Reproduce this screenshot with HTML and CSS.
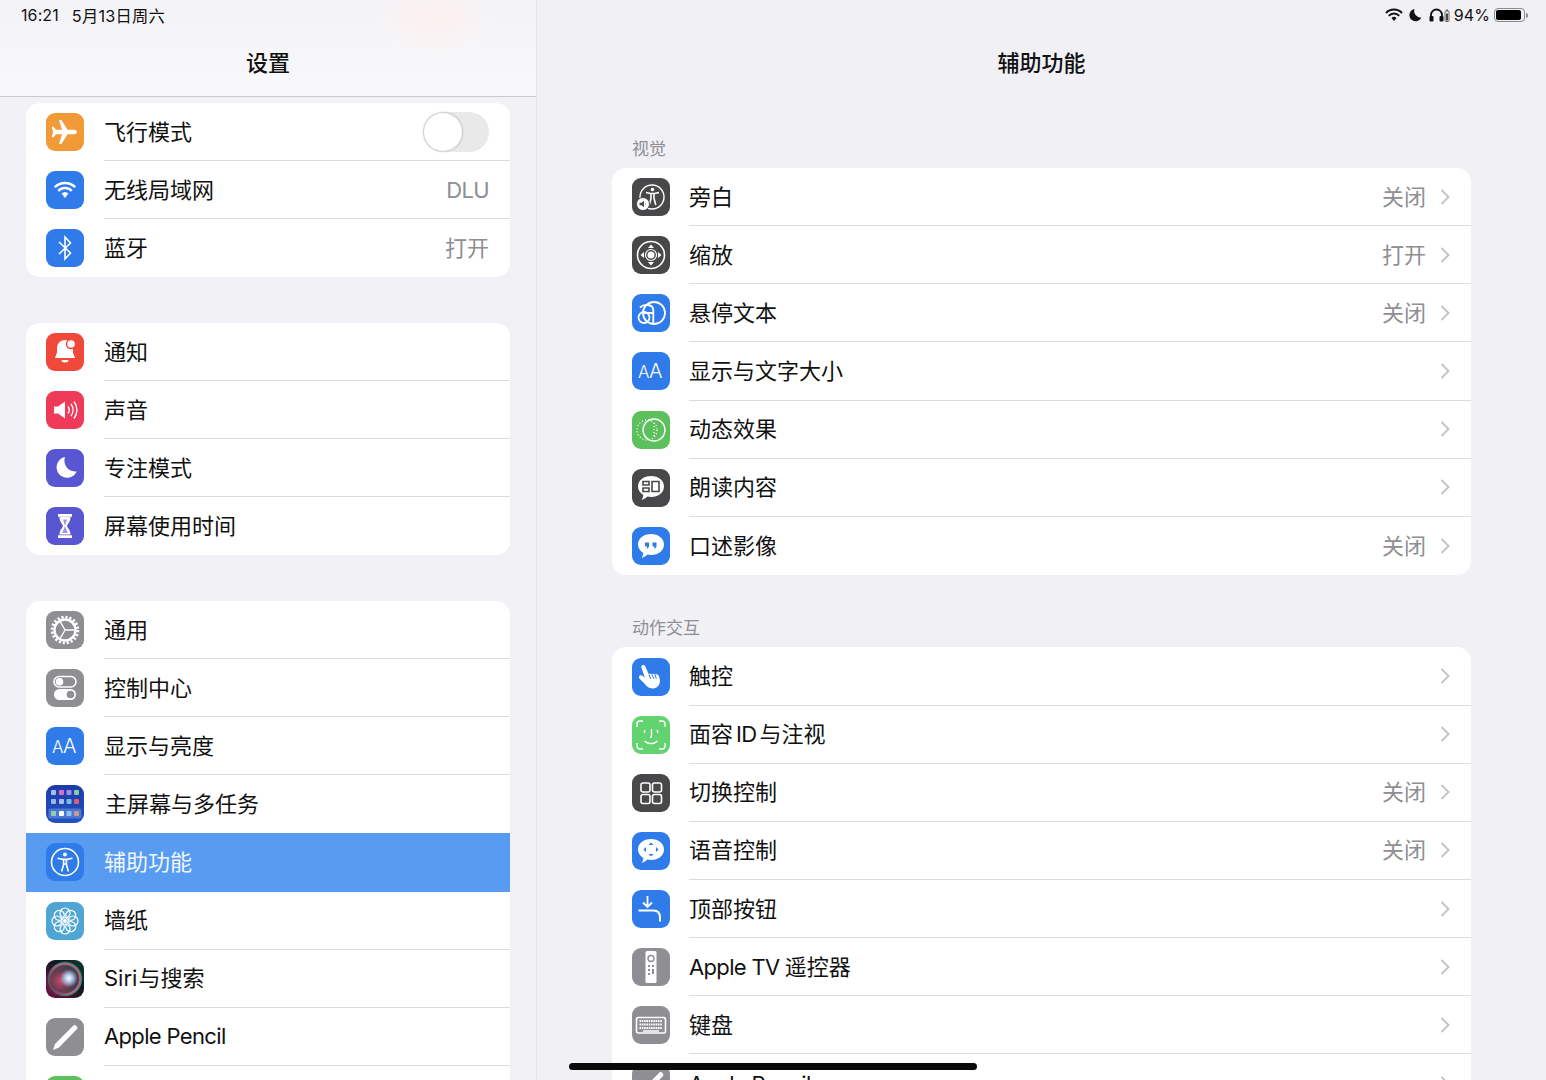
FILE: index.html
```html
<!DOCTYPE html>
<html lang="zh-CN">
<head>
    <meta charset="UTF-8">
    <meta name="viewport" content="width=device-width, initial-scale=1.0">
    <title>设置</title>
    <link rel="stylesheet" href="styles.css">
</head>
<body>
    <div class="app">
        <!-- Left column -->
        <div class="sidebar">
            <div class="side-header">
                <div class="status-bar"><span>16:21</span><span class="date">5月13日周六</span></div>
                <h1 class="title">设置</h1>
            </div>
            <div class="side-list">
                <div class="group">
                    <div class="row">
                        <svg class="icon i-orange" viewBox="0 0 38 38"><path class="fill" d="M31 19c0-1.3-1.6-2.2-3-2.2h-6.5L15.5 7h-2.6l3.2 9.8H10L7.6 13.7H5.8L7 19l-1.2 5.3h1.8l2.4-3.1h6.1L12.9 31h2.6l6-9.8H28c1.4 0 3-.9 3-2.2z"/></svg>
                        <div class="row-body"><span class="label">飞行模式</span><div class="toggle"><div class="knob"></div></div></div>
                    </div>
                    <div class="row">
                        <svg class="icon i-blue" viewBox="0 0 38 38"><path class="line w24" d="M8.75 16.25a14.5 14.5 0 0 1 20.5 0M12.3 19.8a9.5 9.5 0 0 1 13.4 0"/><path class="fill" d="M15.6 22.6a5 5 0 0 1 6.8 0L19 27z"/></svg>
                        <div class="row-body"><span class="label">无线局域网</span><span class="value latin">DLU</span></div>
                    </div>
                    <div class="row">
                        <svg class="icon i-blue" viewBox="0 0 38 38"><path class="line w16" d="M13 13l11.5 11L19 30V8l5.5 6L13 25"/></svg>
                        <div class="row-body"><span class="label">蓝牙</span><span class="value">打开</span></div>
                    </div>
                </div>

                <div class="group">
                    <div class="row">
                        <svg class="icon i-red" viewBox="0 0 38 38"><path class="fill" d="M19 7c-5 0-8 3.6-8 8.5v4L9 25h20l-2-5.500v-4C27 10.600 24 7 19 7zM15.500 27h7a3.500 2.500 0 0 1-7 0z"/><circle cx="25" cy="11" r="4.500" fill="#fff" stroke="#f0493a" stroke-width="1.500"/></svg>
                        <div class="row-body"><span class="label">通知</span></div>
                    </div>
                    <div class="row">
                        <svg class="icon i-pink" viewBox="0 0 38 38"><path class="fill" d="M8 15.500h4l7-5v17l-7-5H8z"/><path class="line w14" d="M22 15.500a6 6 0 0 1 0 7M25 13a10 10 0 0 1 0 12M28 10.500a14 14 0 0 1 0 17"/></svg>
                        <div class="row-body"><span class="label">声音</span></div>
                    </div>
                    <div class="row">
                        <svg class="icon i-indigo" viewBox="0 0 38 38"><path class="fill" d="M19 8a10.500 10.500 0 1 0 11.700 14.500A11 11 0 0 1 19 8z"/></svg>
                        <div class="row-body"><span class="label">专注模式</span></div>
                    </div>
                    <div class="row">
                        <svg class="icon i-indigo" viewBox="0 0 38 38"><path class="fill" d="M12 7h14v2.800H12zM12 28.200h14V31H12zM13.500 10h11c0 5-3 7-3.500 9 .5 2 3.500 4 3.500 8.500h-11c0-4.500 3-6.500 3.500-8.500-.5-2-3.500-4-3.500-9z"/><path d="M17 12.500h4L19 19l2.800 7h-5.600L19 19z" fill="#5856d0" opacity=".6"/></svg>
                        <div class="row-body"><span class="label">屏幕使用时间</span></div>
                    </div>
                </div>

                <div class="group">
                    <div class="row">
                        <svg class="icon i-gray" viewBox="0 0 38 38"><circle class="line" cx="19" cy="19" r="12.800" stroke-width="3" stroke-dasharray="2.200 1.820"/><circle class="line w24" cx="19" cy="19" r="10.500"/><path class="line w14" d="M19 19h9M19 19l-4.500-7.800M19 19l-4.500 7.800"/></svg>
                        <div class="row-body"><span class="label">通用</span></div>
                    </div>
                    <div class="row">
                        <svg class="icon i-gray" viewBox="0 0 38 38"><rect class="line w16" x="8" y="7.500" width="22" height="10.500" rx="5.250"/><circle class="fill" cx="13.500" cy="12.700" r="3.800"/><rect class="fill" x="8" y="20" width="22" height="11" rx="5.500"/><circle cx="24.500" cy="25.500" r="3.800" fill="#8e8e93"/></svg>
                        <div class="row-body"><span class="label">控制中心</span></div>
                    </div>
                    <div class="row">
                        <svg class="icon i-blue" viewBox="0 0 38 38"><text class="glyph" x="6" y="26" font-size="17">A</text><text class="glyph" x="17" y="26" font-size="20">A</text></svg>
                        <div class="row-body"><span class="label">显示与亮度</span></div>
                    </div>
                    <div class="row before-active">
                        <svg class="icon i-navy" viewBox="0 0 38 38">
                            <rect x="5" y="5" width="5" height="5" rx="1" fill="#a9bbe9"/><rect x="13" y="5" width="5" height="5" rx="1" fill="#d86fc0"/><rect x="20.500" y="5" width="5" height="5" rx="1" fill="#a78be8"/><rect x="28" y="5" width="5" height="5" rx="1" fill="#8cc8a0"/>
                            <rect x="5" y="14" width="5" height="5" rx="1" fill="#9bb5e8"/><rect x="13" y="14" width="5" height="5" rx="1" fill="#a8c0e0"/><rect x="20.500" y="14" width="5" height="5" rx="1" fill="#70c0e0"/><rect x="28" y="14" width="5" height="5" rx="1" fill="#e05a70"/>
                            <rect x="2.500" y="23.500" width="33" height="10" rx="2" fill="#4a78d0"/>
                            <rect x="5" y="26" width="5" height="5" rx="1" fill="#8fd0b0"/><rect x="13" y="26" width="5" height="5" rx="1" fill="#fff"/><rect x="20.500" y="26" width="5" height="5" rx="1" fill="#8cc4f0"/><rect x="28" y="26" width="5" height="5" rx="1" fill="#c89a90"/>
                        </svg>
                        <div class="row-body"><span class="label shifted">主屏幕与多任务</span></div>
                    </div>
                    <div class="row active">
                        <svg class="icon i-blue" viewBox="0 0 38 38"><circle class="line w16" cx="19" cy="19" r="13.500"/><circle class="fill" cx="19" cy="11.500" r="2"/><path class="line w16" d="M11.500 15.200l5.500 1.200h4l5.500-1.200M17.600 16.500v5l-2 7M20.400 16.500v5l2 7M17.600 21h2.800"/></svg>
                        <div class="row-body"><span class="label">辅助功能</span></div>
                    </div>
                    <div class="row">
                        <svg class="icon i-teal" viewBox="0 0 38 38">
                            <g class="line w12"><circle cx="19" cy="11" r="5"/><circle cx="24.700" cy="13.300" r="5"/><circle cx="27" cy="19" r="5"/><circle cx="24.700" cy="24.700" r="5"/><circle cx="19" cy="27" r="5"/><circle cx="13.300" cy="24.700" r="5"/><circle cx="11" cy="19" r="5"/><circle cx="13.300" cy="13.300" r="5"/></g>
                            <circle class="fill" cx="19" cy="19" r="2"/>
                        </svg>
                        <div class="row-body"><span class="label">墙纸</span></div>
                    </div>
                    <div class="row">
                        <div class="icon i-siri"></div>
                        <div class="row-body"><span class="label">Siri<span class="tiny-gap">与搜索</span></span></div>
                    </div>
                    <div class="row">
                        <svg class="icon i-gray" viewBox="0 0 38 38"><path class="fill" d="M27.500 7.500c1-.8 2.200-.2 3 .6.800.8 1.300 2 .5 3L13 29.500 7 32l2-6z"/></svg>
                        <div class="row-body"><span class="label latin">Apple Pencil</span></div>
                    </div>
                    <div class="row">
                        <div class="icon i-green"></div>
                        <div class="row-body"></div>
                    </div>
                </div>
            </div>
        </div>

        <!-- Right column -->
        <div class="main">
            <div class="main-header">
                <div class="status-bar status-right">
                    <svg class="st-icon" width="18" height="14" viewBox="0 0 18 14"><path d="M1 5a11 11 0 0 1 16 0M3.800 7.800a7 7 0 0 1 10.400 0" fill="none" stroke="#111" stroke-width="2"/><path d="M6.500 10a3.500 3.500 0 0 1 5 0L9 13z" fill="#111"/></svg>
                    <svg class="st-icon moon" width="13" height="14" viewBox="0 0 13 14"><path d="M5.500 1a6.200 6.200 0 1 0 6.800 8.500A6.500 6.500 0 0 1 5.500 1z" fill="#111"/></svg>
                    <svg class="st-icon phones" width="21" height="14" viewBox="0 0 21 14"><path d="M2 11V7a5.500 5.500 0 0 1 11 0v4" fill="none" stroke="#111" stroke-width="1.800"/><rect x="0.500" y="8" width="4" height="5.500" rx="1" fill="#111"/><rect x="10.500" y="8" width="4" height="5.500" rx="1" fill="#111"/><rect x="16" y="3" width="4" height="10.500" rx="1" fill="none" stroke="#666"/><rect x="17" y="5.500" width="2" height="7" fill="#444"/><rect x="17" y="1.500" width="2" height="1.500" fill="#666"/></svg>
                    <span class="pct">94%</span>
                    <div class="battery"><div class="battery-level"></div></div>
                    <div class="battery-cap"></div>
                </div>
                <h1 class="title">辅助功能</h1>
            </div>
            <div class="main-list">
                <div class="section-title">视觉</div>
                <div class="group wide">
                    <div class="row">
                        <svg class="icon i-dark" viewBox="0 0 38 38"><circle class="line w14" cx="20" cy="19" r="12"/><circle class="fill" cx="20.500" cy="11.500" r="1.800"/><path class="line w16" d="M14 14.500l4.500 1h4l4.500-1M19 15.500v5l-1.800 6.500M22 15.500v5l1.800 6.500"/><circle cx="11" cy="26" r="6.500" fill="#fff" stroke="#48484a" stroke-width="1"/><path d="M7.500 24.800h2l2.500-2v6.400l-2.500-2h-2zM13 24.500a3 3 0 0 1 0 3" fill="#48484a"/></svg>
                        <div class="row-body"><span class="label">旁白</span><span class="value">关闭</span><svg class="chevron" viewBox="0 0 10 16"><path d="M1.500 1l7 7-7 7"/></svg></div>
                    </div>
                    <div class="row">
                        <svg class="icon i-dark" viewBox="0 0 38 38"><circle class="line w16" cx="19" cy="19" r="13.500"/><circle class="line w12" cx="19" cy="19" r="5.500"/><circle class="fill" cx="19" cy="19" r="3.500"/><path class="fill" d="M19 8.500l3 3.500h-6zM19 29.500l3-3.500h-6zM8.500 19l3.500-3v6zM29.500 19L26 16v6z"/></svg>
                        <div class="row-body"><span class="label">缩放</span><span class="value">打开</span><svg class="chevron" viewBox="0 0 10 16"><path d="M1.500 1l7 7-7 7"/></svg></div>
                    </div>
                    <div class="row">
                        <svg class="icon i-blue" viewBox="0 0 38 38"><circle class="line w18" cx="22" cy="19" r="11"/><circle class="line w18" cx="12" cy="23.500" r="5.500"/><path class="line w18" d="M8 13.500c3.500-3.500 13-4 13.300 2.500v14M21.300 19h-9"/></svg>
                        <div class="row-body"><span class="label">悬停文本</span><span class="value">关闭</span><svg class="chevron" viewBox="0 0 10 16"><path d="M1.500 1l7 7-7 7"/></svg></div>
                    </div>
                    <div class="row">
                        <svg class="icon i-blue" viewBox="0 0 38 38"><text class="glyph" x="6" y="26" font-size="17">A</text><text class="glyph" x="17" y="26" font-size="20">A</text></svg>
                        <div class="row-body"><span class="label">显示与文字大小</span><svg class="chevron" viewBox="0 0 10 16"><path d="M1.500 1l7 7-7 7"/></svg></div>
                    </div>
                    <div class="row">
                        <svg class="icon i-green" viewBox="0 0 38 38"><circle class="line w14" cx="22" cy="19" r="11"/><circle class="line w14" cx="15" cy="19" r="10" stroke-dasharray="1 2.200"/><path class="line w14" d="M22 12v14" stroke-dasharray="1 2"/></svg>
                        <div class="row-body"><span class="label">动态效果</span><svg class="chevron" viewBox="0 0 10 16"><path d="M1.500 1l7 7-7 7"/></svg></div>
                    </div>
                    <div class="row">
                        <svg class="icon i-dark" viewBox="0 0 38 38"><path class="fill" d="M19 7c7.500 0 13 4.500 13 10.500S26.500 28 19 28c-1.200 0-2.400-.1-3.500-.4-1.500 1.500-3.500 2.900-6 3.400 1-1.300 1.600-3 1.800-5C8 24 6 21 6 17.500 6 11.500 11.500 7 19 7z"/><path d="M11 12.500h6v3.500h-6zM11 19h6v3.500h-6zM20 12.500h7v10h-7z" fill="none" stroke="#48484a" stroke-width="1.600"/></svg>
                        <div class="row-body"><span class="label">朗读内容</span><svg class="chevron" viewBox="0 0 10 16"><path d="M1.500 1l7 7-7 7"/></svg></div>
                    </div>
                    <div class="row">
                        <svg class="icon i-blue" viewBox="0 0 38 38"><path class="fill" d="M19 7c7.500 0 13 4.500 13 10.500S26.500 28 19 28c-1.200 0-2.400-.1-3.500-.4-1.500 1.500-3.500 2.900-6 3.400 1-1.300 1.600-3 1.800-5C8 24 6 21 6 17.500 6 11.500 11.500 7 19 7z"/><path d="M13 15.500h4v3.500c0 1.500-1 2.500-2.500 2.800.4-.7.600-1.300.6-2.300H13zM20.500 15.500h4v3.500c0 1.500-1 2.500-2.500 2.800.4-.7.600-1.300.6-2.300h-2.100z" fill="#2f7bea"/></svg>
                        <div class="row-body"><span class="label">口述影像</span><span class="value">关闭</span><svg class="chevron" viewBox="0 0 10 16"><path d="M1.500 1l7 7-7 7"/></svg></div>
                    </div>
                </div>

                <div class="section-title">动作交互</div>
                <div class="group wide">
                    <div class="row">
                        <svg class="icon i-blue" viewBox="0 0 38 38"><path class="fill" d="M10 7.500c1.200-1 2.600-.4 3.200.8l3.600 8c1-.8 2.200-.6 3-.1 1-.8 2.400-.4 3.100.3 1.400-.5 3-.1 3.800 1.300 1.400 2.800 1.800 6.500.4 9-1.600 3-5 4.200-8 3.500-3-.6-4.500-2-6-4l-5.500-5.600c-.9-1-.8-2.200 0-2.900.9-.8 2.200-.6 3.200.2l2 1.800L9.600 10c-.5-1-.4-2 .4-2.500z"/><path d="M17 16.500l1.700 4.500M20 16.300l1.700 4.500M23 16.600l1.300 4.200" fill="none" stroke="#2f7bea" stroke-width="1"/></svg>
                        <div class="row-body"><span class="label">触控</span><svg class="chevron" viewBox="0 0 10 16"><path d="M1.500 1l7 7-7 7"/></svg></div>
                    </div>
                    <div class="row">
                        <svg class="icon i-mint" viewBox="0 0 38 38"><path class="line w14" d="M5 11V8c0-1.700 1.300-3 3-3h3M27 5h3c1.700 0 3 1.300 3 3v3M33 27v3c0 1.700-1.300 3-3 3h-3M11 33H8c-1.700 0-3-1.300-3-3v-3M12.500 14v3M25.500 14v3M19.500 13v7c0 1-.5 1.500-1.500 1.500M12.500 25c3.500 3.500 9.500 3.500 13 0"/></svg>
                        <div class="row-body"><span class="label">面容<span class="latin gap">ID</span>与注视</span><svg class="chevron" viewBox="0 0 10 16"><path d="M1.500 1l7 7-7 7"/></svg></div>
                    </div>
                    <div class="row">
                        <svg class="icon i-dark" viewBox="0 0 38 38"><g class="line w16"><rect x="9" y="9" width="9" height="9" rx="2"/><rect x="20.500" y="9" width="9" height="9" rx="2"/><rect x="9" y="20.500" width="9" height="9" rx="2"/><rect x="20.500" y="20.500" width="9" height="9" rx="2"/></g></svg>
                        <div class="row-body"><span class="label">切换控制</span><span class="value">关闭</span><svg class="chevron" viewBox="0 0 10 16"><path d="M1.500 1l7 7-7 7"/></svg></div>
                    </div>
                    <div class="row">
                        <svg class="icon i-blue" viewBox="0 0 38 38"><path class="fill" d="M19 7c7.500 0 13 4.500 13 10.500S26.500 28 19 28c-1.200 0-2.400-.1-3.500-.4-1.500 1.500-3.500 2.900-6 3.400 1-1.300 1.600-3 1.800-5C8 24 6 21 6 17.500 6 11.500 11.500 7 19 7z"/><path d="M19 10.500l2.500 2.500h-5zM19 24.500l2.500-2.500h-5zM11.500 17.500l2.500-2.500v5zM26.500 17.500L24 15v5z" fill="#2f7bea"/></svg>
                        <div class="row-body"><span class="label">语音控制</span><span class="value">关闭</span><svg class="chevron" viewBox="0 0 10 16"><path d="M1.500 1l7 7-7 7"/></svg></div>
                    </div>
                    <div class="row">
                        <svg class="icon i-blue" viewBox="0 0 38 38"><path class="line w18" d="M15.500 6v11M11 12.500l4.500 4.500 4.500-4.500"/><path class="line w20" d="M6.500 20.500h15c4.500 0 6.500 3 6.500 7v4"/></svg>
                        <div class="row-body"><span class="label">顶部按钮</span><svg class="chevron" viewBox="0 0 10 16"><path d="M1.500 1l7 7-7 7"/></svg></div>
                    </div>
                    <div class="row">
                        <svg class="icon i-gray" viewBox="0 0 38 38"><rect class="fill" x="13.500" y="3" width="11" height="32" rx="1.500"/><circle cx="19" cy="10.500" r="3" fill="none" stroke="#8e8e93" stroke-width="1.400"/><path d="M16 17h2v2h-2zM20 17h2v2h-2zM16 21h2v2h-2zM20 21h2v5h-2zM16 25h2v2h-2z" fill="#8e8e93"/></svg>
                        <div class="row-body"><span class="label"><span class="latin tv">Apple TV</span>遥控器</span><svg class="chevron" viewBox="0 0 10 16"><path d="M1.500 1l7 7-7 7"/></svg></div>
                    </div>
                    <div class="row">
                        <svg class="icon i-gray" viewBox="0 0 38 38"><rect class="line w16" x="4.500" y="11.500" width="29" height="15.500" rx="2"/><path class="line w18" d="M7.500 15h23M7.500 18.500h23M7.500 22h23" stroke-dasharray="1.600 .7"/><path class="line w14" d="M11 25h16"/></svg>
                        <div class="row-body"><span class="label">键盘</span><svg class="chevron" viewBox="0 0 10 16"><path d="M1.500 1l7 7-7 7"/></svg></div>
                    </div>
                    <div class="row">
                        <svg class="icon i-gray" viewBox="0 0 38 38"><path class="fill" d="M27.500 7.500c1-.8 2.200-.2 3 .6.800.8 1.300 2 .5 3L13 29.500 7 32l2-6z"/></svg>
                        <div class="row-body"><span class="label latin">Apple Pencil</span><svg class="chevron" viewBox="0 0 10 16"><path d="M1.500 1l7 7-7 7"/></svg></div>
                    </div>
                </div>
            </div>
        </div>
    </div>
    <div class="home-bar"></div>
</body>
</html>
```

FILE: styles.css
```css
html, body {
    margin: 0;
    height: 1080px;
    overflow: hidden;
}
body {
    background: #f0f0f5;
    color: #111;
    font-family: "Inter", "Noto Sans CJK SC", sans-serif;
}
.app {
    display: flex;
    height: 1080px;
}
.sidebar {
    width: 536px;
    flex: none;
    border-right: 1px solid #e3e3e8;
    background: #f1f1f6;
    overflow: hidden;
}
.side-header {
    height: 97px;
    box-sizing: border-box;
    border-bottom: 1px solid #c9c9ce;
    background:
        radial-gradient(ellipse 60px 40px at 435px 18px, #fdf0ee, transparent),
        linear-gradient(#f3f3f7, #f9f9fb);
}
.status-bar {
    display: flex;
    align-items: center;
    gap: 13px;
    height: 30px;
    padding: 0 21px;
    font-size: 16px;
    letter-spacing: .1px;
}
.date {
    font-size: 16.300px;
    letter-spacing: .2px;
}
.title {
    margin: 0;
    padding-top: 14px;
    height: 38px;
    line-height: 38px;
    font-size: 22px;
    font-weight: 500;
    text-align: center;
}
.side-list {
    padding: 6px 26px 0;
}
.main {
    flex: 1;
    overflow: hidden;
}
.main-header {
    height: 97px;
}
.status-right {
    justify-content: flex-end;
    gap: 0;
    padding: 0 18px 0 0;
}
.st-icon {
    display: block;
    margin-right: 6px;
}
.moon {
    margin-right: 7px;
}
.phones {
    margin-right: 4px;
}
.pct {
    margin-right: 4px;
}
.battery {
    width: 31px;
    height: 14px;
    box-sizing: border-box;
    border: 1px solid #8a8a8e;
    border-radius: 4px;
    padding: 1px;
}
.battery-level {
    width: 94%;
    height: 100%;
    background: #000;
    border-radius: 2px;
}
.battery-cap {
    width: 2px;
    height: 5px;
    margin-left: 1px;
    background: #8a8a8e;
    border-radius: 0 2px 2px 0;
}
.main-list {
    padding: 0 75px;
}
.group {
    background: #fff;
    border-radius: 14px;
    overflow: hidden;
    margin-bottom: 45.700px;
}
.row {
    display: flex;
    align-items: center;
    gap: 20px;
    height: 58.100px;
    padding-left: 20px;
}
.row-body {
    flex: 1;
    height: 100%;
    box-sizing: border-box;
    display: flex;
    align-items: center;
    justify-content: space-between;
    padding-right: 21px;
    border-bottom: 1px solid #dcdce0;
}
.row:last-child .row-body,
.before-active .row-body,
.active .row-body {
    border-bottom: none;
}
.label {
    font-size: 22px;
    line-height: 1;
}
.latin {
    letter-spacing: -.65px;
}
.gap {
    margin: 0 3px;
}
.tv {
    margin-right: 5px;
}
.tiny-gap {
    margin-left: 1px;
}
.shifted {
    margin-left: 1px;
}
.value {
    font-size: 22px;
    line-height: 1;
    color: #8e8e93;
}
.active {
    background: #589cf2;
    color: #f1f6fe;
}
.toggle {
    width: 66px;
    height: 40px;
    box-sizing: border-box;
    padding: 1px;
    border-radius: 20px;
    background: #e9e9ea;
}
.knob {
    width: 38px;
    height: 38px;
    border-radius: 50%;
    background: #fff;
    box-shadow: 0 0 3px rgba(0, 0, 0, .3);
}

/* right side rows are a bit taller and have chevrons */
.wide {
    margin-bottom: 0;
}
.wide .row {
    height: 58.150px;
    gap: 19px;
}
.wide .row-body {
    justify-content: flex-start;
}
.wide .label {
    margin-right: auto;
}
.chevron {
    width: 10px;
    height: 16px;
    margin-left: 14px;
    fill: none;
    stroke: #c5c5c9;
    stroke-width: 2;
}
.section-title {
    padding-left: 20px;
    height: 32px;
    line-height: 26px;
    font-size: 17px;
    color: #8e8e93;
}
.main-list .section-title:first-child {
    margin-top: 39px;
}
.group.wide + .section-title {
    margin-top: 40.500px;
}

/* icons */
.icon {
    display: block;
    flex: none;
    width: 38px;
    height: 38px;
    border-radius: 9px;
}
.fill {
    fill: #fff;
}
.line {
    fill: none;
    stroke: #fff;
}
.w12 { stroke-width: 1.2; }
.w14 { stroke-width: 1.4; }
.w16 { stroke-width: 1.6; }
.w18 { stroke-width: 1.8; }
.w20 { stroke-width: 2; }
.w24 { stroke-width: 2.4; }
.glyph {
    fill: #fff;
    font-family: "Inter", sans-serif;
    font-weight: 300;
}
.i-orange { background: #f19a38; }
.i-blue { background: #2f7bea; }
.i-red { background: #f0493a; }
.i-pink { background: #ef3a5a; }
.i-indigo { background: #5856d0; }
.i-gray { background: #8e8e93; }
.i-navy { background: linear-gradient(#1c3aa8, #2352c4); }
.i-teal { background: #4fa6d4; }
.i-green { background: #5cc05c; }
.i-mint { background: #63d370; }
.i-dark { background: #48484a; }
.i-siri {
    background:
        radial-gradient(circle at 60% 48%, #fff 0, #a9bcdc 14%, transparent 30%),
        radial-gradient(circle at 38% 55%, #c24a6c 0, #6d3a50 30%, transparent 50%),
        radial-gradient(circle at 50% 50%, #2e3640 0, #3a4450 50%, #d85a7a 55%, #3a8a7a 61%, transparent 66%),
        linear-gradient(45deg, #7a0f45, #101820 60%, #0c3a30);
}

.home-bar {
    position: absolute;
    left: 569px;
    top: 1063px;
    width: 408px;
    height: 7px;
    border-radius: 4px;
    background: #0a0a0a;
}
```
